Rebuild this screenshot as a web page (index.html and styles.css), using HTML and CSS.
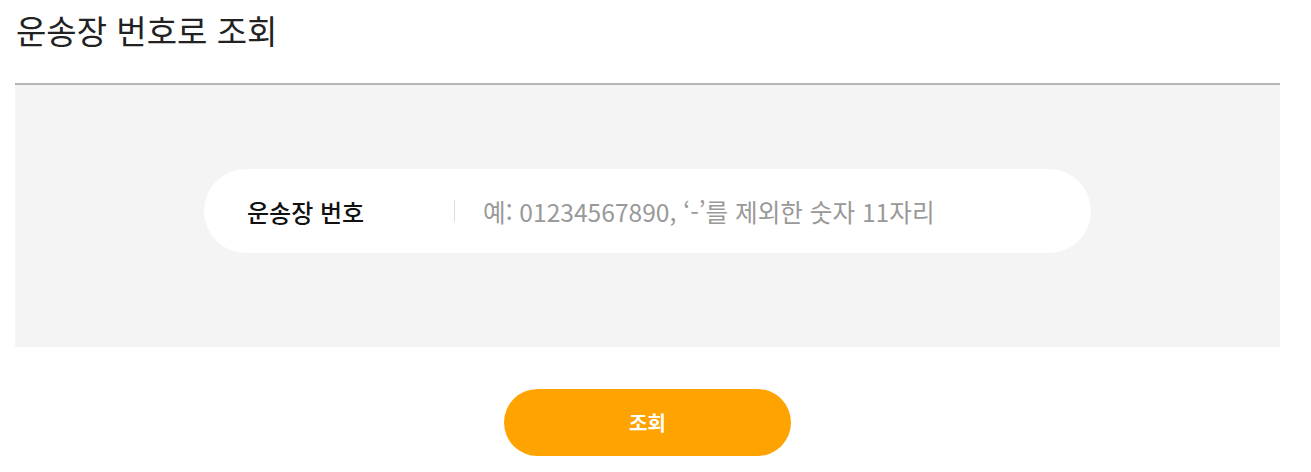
FILE: index.html
```html
<!DOCTYPE html>
<html lang="ko">
<head>
  <meta charset="UTF-8">
  <meta name="viewport" content="width=device-width, initial-scale=1.0">
  <title>운송장 번호로 조회</title>
  <link rel="stylesheet" href="styles.css">
</head>
<body>
  <div class="wrap">
    <h2 class="tit">운송장 번호로 조회</h2>
    <div class="search-box">
      <div class="search-field">
        <label for="invoice" class="search-label">운송장 번호</label>
        <span class="bar"></span>
        <input type="text" id="invoice" class="search-input" placeholder="예: 01234567890, ‘-’를 제외한 숫자 11자리">
      </div>
    </div>
    <div class="btn-area">
      <button type="button" class="btn-search">조회</button>
    </div>
  </div>
</body>
</html>
```

FILE: styles.css
```css
body {
  margin: 0;
  font-family: 'Noto Sans CJK KR', 'Noto Sans', sans-serif;
  color: #222;
  background-color: #fff;
}
.wrap {
  width: 1265px;
  margin-left: 15px;
}
.tit {
  margin: 0;
  padding: 7px 0 30px 1px;
  font-size: 33px;
  font-weight: 400;
  line-height: 46px;
  color: #222;
}
.search-box {
  border-top: 2px solid #b5b5b5;
  background-color: #f4f4f4;
  padding: 84px 0 94px;
}
.search-field {
  display: flex;
  align-items: center;
  width: 887px;
  height: 84px;
  margin: 0 auto;
  background-color: #fff;
  border-radius: 42px;
  box-sizing: border-box;
  padding: 0 30px 0 43px;
}
.search-label {
  width: 207px;
  font-size: 24px;
  font-weight: 500;
  color: #111;
}
.bar {
  width: 1px;
  height: 22px;
  background-color: #ddd;
}
.search-input {
  flex: 1;
  margin-left: 26px;
  border: none;
  outline: none;
  font-family: inherit;
  font-size: 24.6px;
  color: #222;
  background: transparent;
}
.search-input::placeholder {
  color: #999;
}
.btn-area {
  display: flex;
  justify-content: center;
  padding-top: 42px;
}
.btn-search {
  width: 287px;
  height: 67px;
  border: none;
  border-radius: 34px;
  background-color: #ffa300;
  color: #fff;
  font-family: inherit;
  font-size: 20px;
  font-weight: 700;
  cursor: pointer;
}
```
